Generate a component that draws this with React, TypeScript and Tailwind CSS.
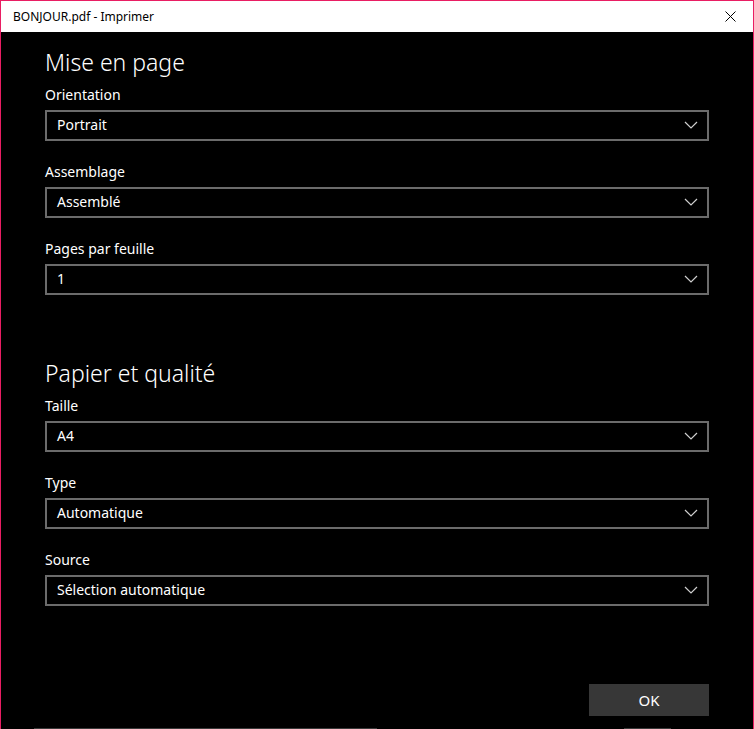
import React from 'react';

const font = { fontFamily: '"Noto Sans", "Open Sans", sans-serif' };

interface SelectProps {
  label: string;
  value: string;
  first?: boolean;
}

const Chevron = () => (
  <svg width="14" height="8" viewBox="0 0 14 8" className="text-[#cfcfcf]">
    <polyline points="1,1 7,7 13,1" fill="none" stroke="currentColor" strokeWidth="1.2" />
  </svg>
);

const SelectField: React.FC<SelectProps> = ({ label, value, first }) => (
  <div className={first ? 'mt-[7px]' : 'mt-[21px]'}>
    <div className="text-[14px] leading-[20px] text-white">{label}</div>
    <div className="mt-[5px] h-[31px] w-[664px] border-2 border-[#6b6b6b] flex items-center justify-between pl-[10px] pr-[9px] pb-[2px]">
      <span className="text-[14px] text-white">{value}</span>
      <Chevron />
    </div>
  </div>
);

export default function App() {
  return (
    <div
      className="w-[754px] h-[729px] bg-black border-t border-l border-r border-[#e91e63] flex flex-col overflow-hidden"
      style={font}
    >
      {/* Title bar */}
      <div className="h-[31px] bg-white flex items-center justify-between pl-[12px] pr-[17px] shrink-0">
        <span className="text-[12px] text-black">BONJOUR.pdf - Imprimer</span>
        <svg width="11" height="11" viewBox="0 0 11 11">
          <path d="M0.5 0.5 L10.5 10.5 M10.5 0.5 L0.5 10.5" stroke="#000" strokeWidth="1" />
        </svg>
      </div>

      <div className="flex-1 flex flex-col pl-[44px] pt-[14px]">
        <div className="text-[23px] leading-[32px] font-light text-white">Mise en page</div>
        <SelectField first label="Orientation" value="Portrait" />
        <SelectField label="Assemblage" value="Assemblé" />
        <SelectField label="Pages par feuille" value="1" />

        <div className="mt-[62px] text-[23px] leading-[32px] font-light text-white">Papier et qualité</div>
        <SelectField first label="Taille" value="A4" />
        <SelectField label="Type" value="Automatique" />
        <SelectField label="Source" value="Sélection automatique" />

        <div className="mt-[78px] w-[664px] flex justify-end">
          <button className="w-[120px] h-[32px] bg-[#373737] text-white text-[15px]">OK</button>
        </div>
      </div>

      <div className="h-px flex shrink-0">
        <div className="w-[33px]" />
        <div className="w-[343px] bg-[#3a3a3a]" />
        <div className="w-[247px]" />
        <div className="w-[47px] bg-[#3a3a3a]" />
      </div>
    </div>
  );
}
